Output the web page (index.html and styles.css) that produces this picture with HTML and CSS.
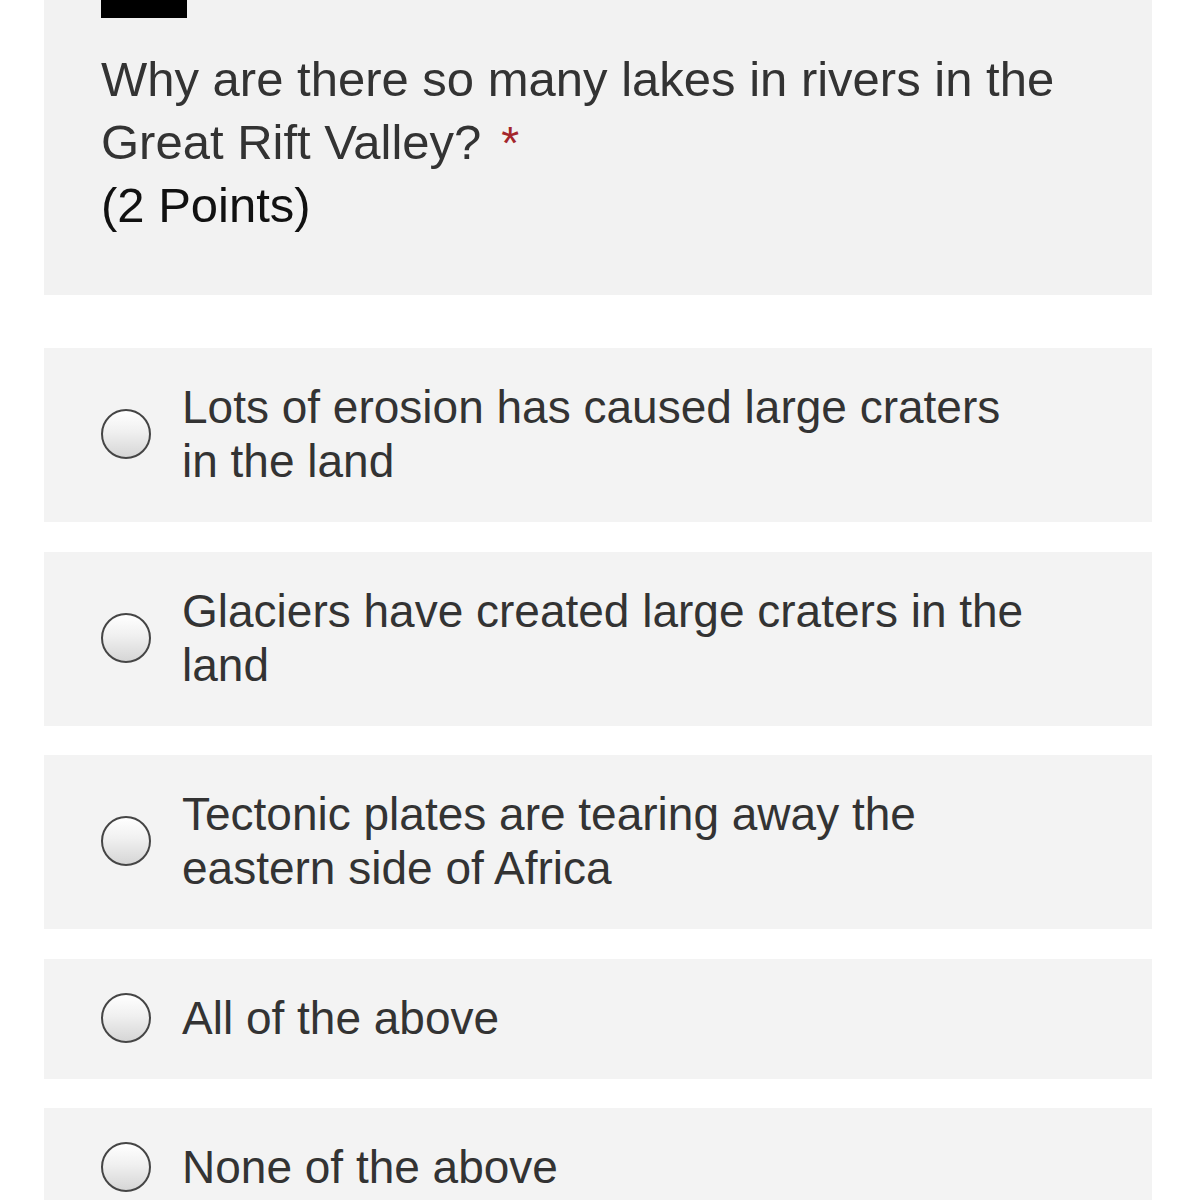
FILE: index.html
```html
<!DOCTYPE html>
<html lang="en">
<head>
<meta charset="utf-8">
<title>Question</title>
<link rel="stylesheet" href="styles.css">
</head>
<body>
<div class="page">
  <section class="question-card">
    <div class="redacted"></div>
    <div class="question-title">Why are there so many lakes in rivers in the Great Rift Valley?<span class="required">*</span></div>
    <div class="question-points">(2 Points)</div>
  </section>
  <div class="options">
    <label class="option">
      <span class="radio"></span>
      <span class="option-text">Lots of erosion has caused large craters in the land</span>
    </label>
    <label class="option">
      <span class="radio"></span>
      <span class="option-text">Glaciers have created large craters in the land</span>
    </label>
    <label class="option">
      <span class="radio"></span>
      <span class="option-text">Tectonic plates are tearing away the eastern side of Africa</span>
    </label>
    <label class="option">
      <span class="radio"></span>
      <span class="option-text">All of the above</span>
    </label>
    <label class="option">
      <span class="radio"></span>
      <span class="option-text">None of the above</span>
    </label>
  </div>
</div>
</body>
</html>
```

FILE: styles.css
```css
html, body {
  margin: 0;
  padding: 0;
  background: #ffffff;
}

body {
  font-family: "Liberation Sans", Arial, Helvetica, sans-serif;
  color: #333333;
}

.page {
  width: 1108px;
  margin-left: 44px;
}

.question-card {
  background: #f2f2f2;
  padding: 0 40px 58px 57px;
}

.redacted {
  width: 86px;
  height: 18px;
  background: #000000;
  margin-bottom: 30px;
}

.question-title,
.question-points {
  font-size: 49px;
  line-height: 63px;
}

.question-points {
  color: #111111;
}

.required {
  display: inline-block;
  color: #a4262c;
  font-size: 46px;
  line-height: 46px;
  margin-left: 20px;
}

.options {
  display: flex;
  flex-direction: column;
  gap: 29.5px;
  margin-top: 53px;
}

.option {
  display: flex;
  align-items: center;
  gap: 31px;
  background: #f3f3f3;
  padding: 32px 110px 34px 57px;
}

.radio {
  flex: none;
  width: 46px;
  height: 46px;
  border: 2.5px solid #454545;
  border-radius: 50%;
  background: linear-gradient(to bottom, #ffffff 0%, #f0f0f0 45%, #d6d6d6 100%);
}

.option-text {
  font-size: 46px;
  line-height: 54px;
  color: #333333;
}
```
